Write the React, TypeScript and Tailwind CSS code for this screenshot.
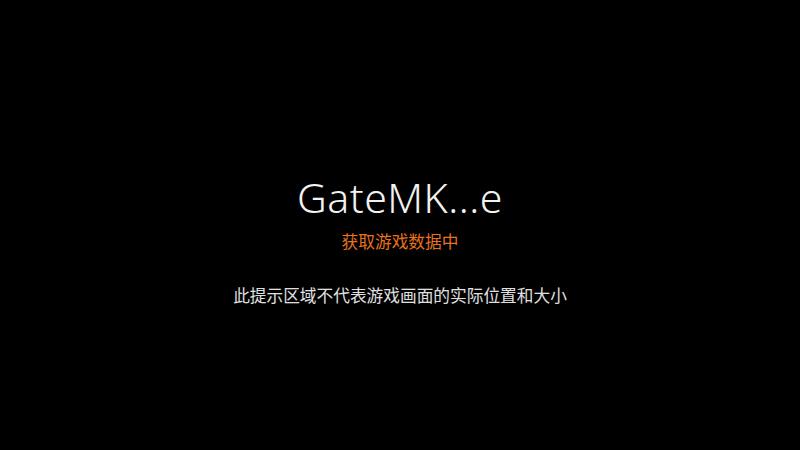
export default function App() {
  return (
    <div className="w-[800px] h-[450px] bg-black flex flex-col items-center font-['Noto_Sans','Noto_Sans_CJK_SC',sans-serif]">
      <div className="mt-[173px] text-[41px] leading-[48px] font-light text-[#f2f2f2] tracking-[0.5px]">GateMK...e</div>
      <div className="mt-[10px] text-[16.7px] leading-[22px] text-[#e8731c]">获取游戏数据中</div>
      <div className="mt-[32px] text-[16.7px] leading-[22px] text-[#e0e0e0]">此提示区域不代表游戏画面的实际位置和大小</div>
    </div>
  )
}
